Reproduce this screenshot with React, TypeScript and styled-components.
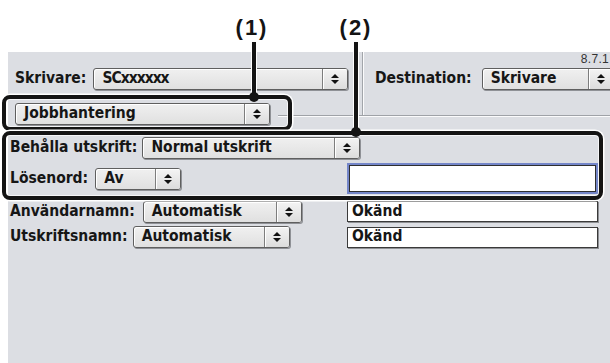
import styled, { createGlobalStyle } from 'styled-components';

const GlobalStyle = createGlobalStyle`
  html, body {
    margin: 0;
    padding: 0;
    background: #fff;
  }
  body {
    font-family: 'DejaVu Sans Condensed', 'DejaVu Sans', 'Liberation Sans', sans-serif;
    font-stretch: condensed;
  }
`;

const Page = styled.div`
  position: relative;
  width: 610px;
  height: 363px;
  overflow: hidden;
  background: #fff;
  padding: 52px 0 0 8px;
  box-sizing: border-box;
`;

const Panel = styled.div`
  width: 602px;
  height: 311px;
  background: #dcdee3;
  color: #161616;
  font-size: 15.5px;
  font-weight: 700;
  line-height: 1;
`;

const TopSection = styled.div`
  display: grid;
  grid-template-columns: 354px 2px minmax(0, 1fr);
  height: 64px;
`;

const PrinterCell = styled.div`
  display: flex;
  align-items: flex-start;
  padding: 16px 0 0 7px;
`;

const Divider = styled.div`
  border-left: 1px solid #a2a5aa;
  border-right: 1px solid #fbfbfc;
`;

const DestinationCell = styled.div`
  display: flex;
  flex-direction: column;
  min-width: 0;
  padding: 1px 0 0 11px;
`;

const Version = styled.div`
  align-self: flex-end;
  height: 12px;
  padding-right: 1px;
  font-family: 'Liberation Sans', Arial, sans-serif;
  font-stretch: normal;
  font-weight: 400;
  font-size: 12px;
  letter-spacing: 0.3px;
  color: #333;
`;

const FieldRow = styled.div<{ $top?: number; $h: number }>`
  display: flex;
  align-items: center;
  height: ${({ $h }) => $h}px;
  margin-top: ${({ $top = 0 }) => $top}px;
`;

const Label = styled.span<{ $gap?: number }>`
  white-space: nowrap;
  margin-right: ${({ $gap = 5 }) => $gap}px;
`;

const GroupRow = styled.div`
  display: flex;
  align-items: flex-start;
  margin-top: -13px;
  padding-left: 7px;
`;

const GroupLine = styled.div`
  flex: 1;
  margin: 12px 0 0 8px;
  height: 0;
  border-top: 1px solid #9fa2a7;
  border-bottom: 1px solid #fbfbfc;
`;

const FormGrid = styled.div`
  display: flex;
  flex-direction: column;
  padding-left: 2px;
`;

const LeftCell = styled.div`
  display: flex;
  align-items: center;
  width: 337px;
`;

const Popup = styled.div<{ $w: number }>`
  display: flex;
  flex: none;
  width: ${({ $w }) => $w}px;
  height: 22px;
  box-sizing: border-box;
  border: 1px solid #5f5f5f;
  border-radius: 3px;
  background: linear-gradient(#f0f0f0, #e0e0e0);
  box-shadow: 1px 1px 0 #8f9196, inset 1px 1px 0 #fff;
  overflow: hidden;
`;

const PopupText = styled.span<{ $tight?: boolean }>`
  flex: 1;
  display: flex;
  align-items: center;
  padding-left: 8px;
  white-space: nowrap;
  letter-spacing: ${({ $tight }) => ($tight ? '-1px' : '0')};
`;

const Stepper = styled.span`
  flex: none;
  width: 24px;
  display: flex;
  align-items: center;
  justify-content: center;
  border-left: 1px solid #7d7d7d;
  background: linear-gradient(#f4f4f4, #dcdcdc);
  box-shadow: inset 1px 1px 0 #fff;
`;

const TextBox = styled.div`
  display: flex;
  align-items: center;
  width: 251px;
  height: 21px;
  box-sizing: border-box;
  padding-left: 4px;
  background: #fff;
  border: 1px solid #3a3a3a;
  box-shadow: 1px 1px 0 #8e9094;
`;

const PasswordBox = styled.div`
  width: 251px;
  height: 31px;
  box-sizing: border-box;
  background: #fff;
  border: 2px solid #7486c9;
  box-shadow: inset 0 0 0 1px #2f2f2f;
`;

const Overlay = styled.div`
  position: absolute;
  inset: 0;
  pointer-events: none;
`;

const CalloutBox = styled.div<{ $x: number; $y: number; $w: number; $h: number }>`
  position: absolute;
  left: ${({ $x }) => $x}px;
  top: ${({ $y }) => $y}px;
  width: ${({ $w }) => $w}px;
  height: ${({ $h }) => $h}px;
  box-sizing: border-box;
  border: 4px solid #141414;
  border-radius: 8px;
  box-shadow: 0 0 0 1.5px #fff, inset 0 0 0 1px rgba(255, 255, 255, 0.7);
`;

const Leader = styled.div<{ $x: number; $y: number; $h: number }>`
  position: absolute;
  left: ${({ $x }) => $x - 2}px;
  top: ${({ $y }) => $y}px;
  width: 4px;
  height: ${({ $h }) => $h}px;
  background: #141414;
  box-shadow: 0 0 0 1px #fff;

  &::after {
    content: '';
    position: absolute;
    left: -3px;
    bottom: -5px;
    width: 10px;
    height: 10px;
    border-radius: 50%;
    background: #141414;
  }
`;

const CalloutNumber = styled.div<{ $x: number }>`
  position: absolute;
  left: ${({ $x }) => $x}px;
  top: 17px;
  transform: translateX(-50%);
  font-family: 'Liberation Sans', Arial, sans-serif;
  font-stretch: normal;
  font-weight: 700;
  font-size: 22px;
  letter-spacing: 2px;
  line-height: 1;
  color: #141414;
`;

function Arrows() {
  return (
    <svg width="8" height="12" viewBox="0 0 8 12">
      <polygon points="0,5 4,1 8,5" fill="#111" />
      <polygon points="0,7 4,11 8,7" fill="#111" />
    </svg>
  );
}

function PopupMenu({ value, width, tight }: { value: string; width: number; tight?: boolean }) {
  return (
    <Popup $w={width}>
      <PopupText $tight={tight}>{value}</PopupText>
      <Stepper>
        <Arrows />
      </Stepper>
    </Popup>
  );
}

export default function App() {
  return (
    <Page>
      <GlobalStyle />
      <Panel>
        <TopSection>
          <PrinterCell>
            <FieldRow $h={22}>
              <Label $gap={7}>Skrivare:</Label>
              <PopupMenu value="SCxxxxxx" width={255} tight />
            </FieldRow>
          </PrinterCell>
          <Divider />
          <DestinationCell>
            <Version>8.7.1</Version>
            <FieldRow $top={3} $h={22}>
              <Label $gap={10}>Destination:</Label>
              <PopupMenu value="Skrivare" width={132} />
            </FieldRow>
          </DestinationCell>
        </TopSection>

        <GroupRow>
          <PopupMenu value="Jobbhantering" width={255} />
          <GroupLine />
        </GroupRow>

        <FormGrid>
          <FieldRow $top={12} $h={22}>
            <LeftCell>
              <Label>Behålla utskrift:</Label>
              <PopupMenu value="Normal utskrift" width={218} />
            </LeftCell>
          </FieldRow>
          <FieldRow $top={4} $h={31}>
            <LeftCell>
              <Label $gap={7}>Lösenord:</Label>
              <PopupMenu value="Av" width={86} />
            </LeftCell>
            <PasswordBox />
          </FieldRow>
          <FieldRow $top={6} $h={23}>
            <LeftCell>
              <Label $gap={8}>Användarnamn:</Label>
              <PopupMenu value="Automatisk" width={159} />
            </LeftCell>
            <TextBox>Okänd</TextBox>
          </FieldRow>
          <FieldRow $top={3} $h={22}>
            <LeftCell>
              <Label>Utskriftsnamn:</Label>
              <PopupMenu value="Automatisk" width={157} />
            </LeftCell>
            <TextBox>Okänd</TextBox>
          </FieldRow>
        </FormGrid>
      </Panel>

      <Overlay>
        <CalloutBox $x={2} $y={95} $w={290} $h={36} />
        <CalloutBox $x={2} $y={131} $w={601} $h={69} />
        <Leader $x={254} $y={42} $h={55} />
        <Leader $x={356} $y={42} $h={90} />
        <CalloutNumber $x={252}>(1)</CalloutNumber>
        <CalloutNumber $x={356}>(2)</CalloutNumber>
      </Overlay>
    </Page>
  );
}
